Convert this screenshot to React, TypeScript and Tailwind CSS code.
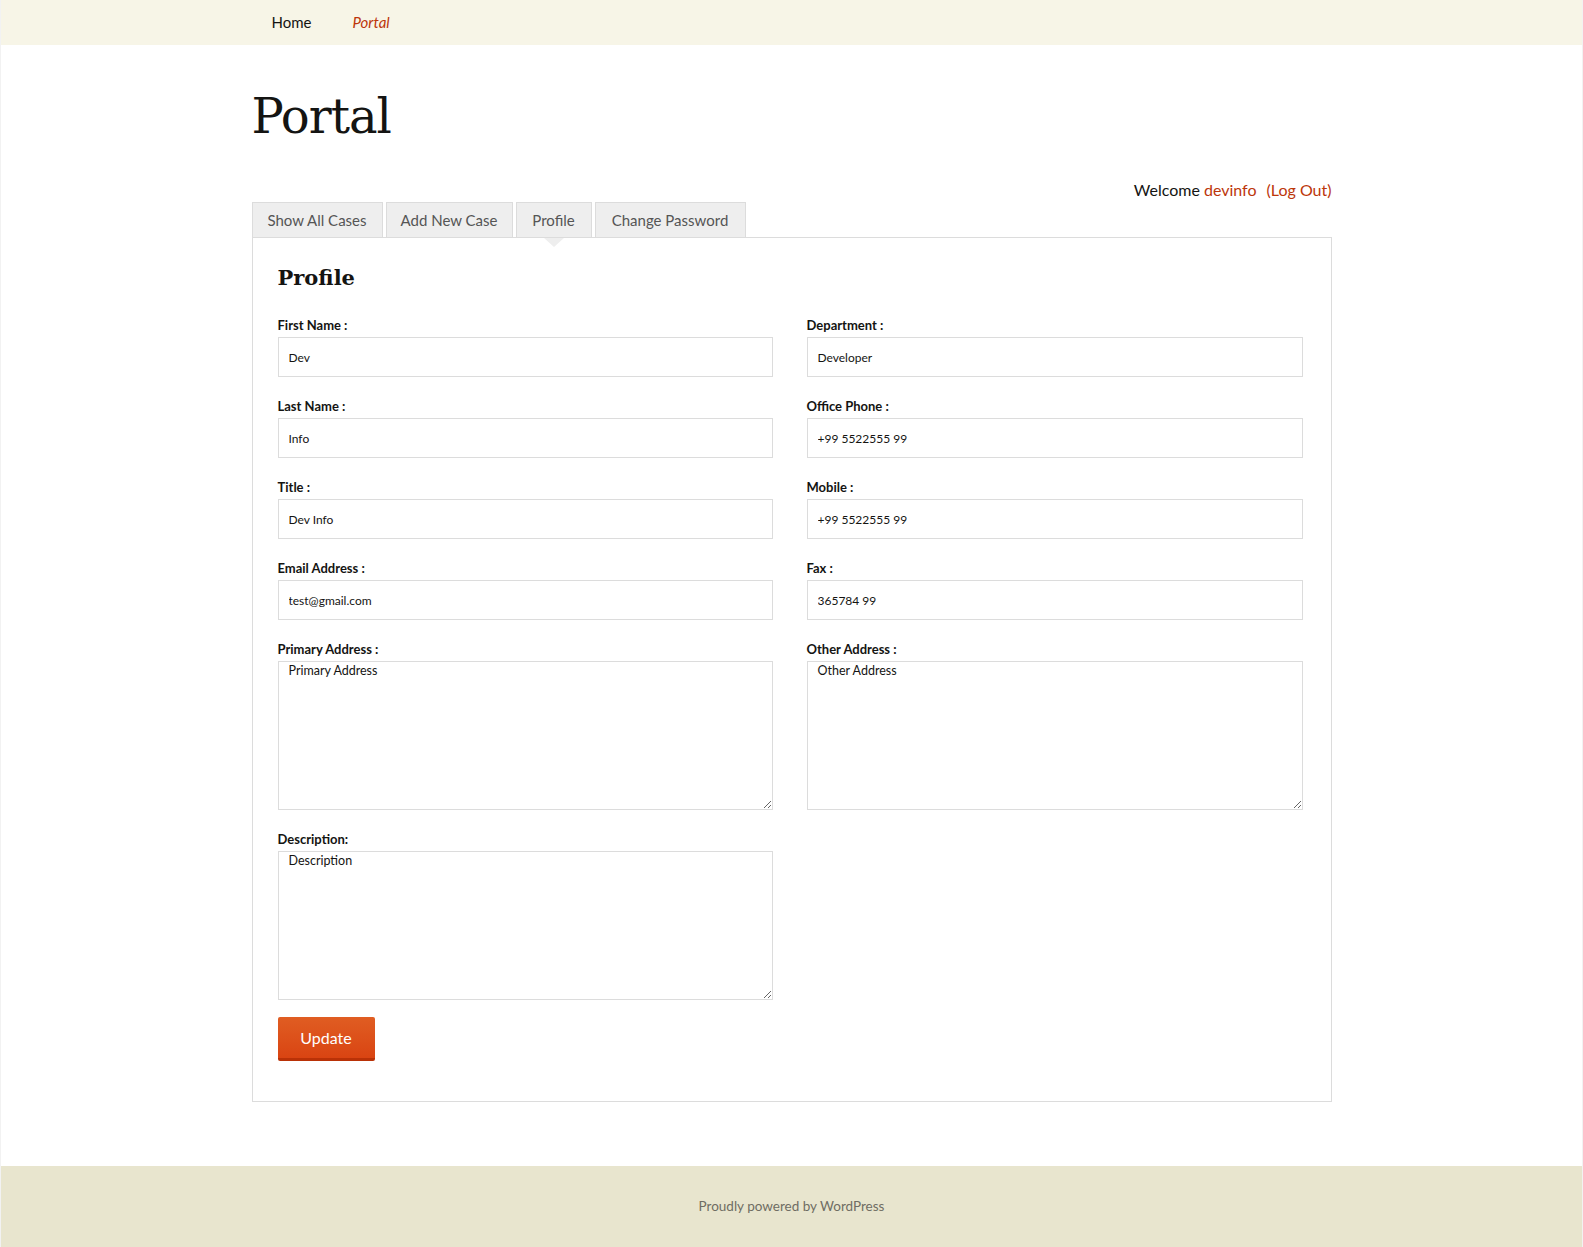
import React from 'react';

const leftFields = [
  { label: 'First Name :', value: 'Dev' },
  { label: 'Last Name :', value: 'Info' },
  { label: 'Title :', value: 'Dev Info' },
  { label: 'Email Address :', value: 'test@gmail.com' },
];

const rightFields = [
  { label: 'Department :', value: 'Developer' },
  { label: 'Office Phone :', value: '+99 5522555 99' },
  { label: 'Mobile :', value: '+99 5522555 99' },
  { label: 'Fax :', value: '365784 99' },
];

const tabs = [
  { name: 'Show All Cases', width: 'w-[131px]' },
  { name: 'Add New Case', width: 'w-[127px]' },
  { name: 'Profile', width: 'w-[76px]', active: true },
  { name: 'Change Password', width: 'w-[151px]' },
];

const Field = ({ label, value }: { label: string; value: string }) => (
  <div>
    <label className="block text-[13px] font-bold leading-[17px] text-[#141412]">{label}</label>
    <input
      className="mt-[3px] block h-[40px] w-full border border-[#dcdcdc] px-[10px] text-[12px] text-[#141412] outline-none"
      defaultValue={value}
      type="text"
    />
  </div>
);

const AreaField = ({ label, value }: { label: string; value: string }) => (
  <div>
    <label className="block text-[13px] font-bold leading-[17px] text-[#141412]">{label}</label>
    <textarea
      className="mt-[3px] block h-[149px] w-full border border-[#dcdcdc] px-[10px] pt-0 text-[12.5px] leading-[18px] text-[#141412] outline-none"
      defaultValue={value}
    />
  </div>
);

const App = () => {
  return (
    <div className="min-h-screen bg-white font-['Lato',sans-serif] text-[#141412]">
      <div className="border-x border-[#f2f2f2]">
        <header className="h-[45px] bg-[#f7f5e7]">
          <nav className="mx-auto flex h-full w-[1080px] items-center pl-5 text-[15px]">
            <a className="text-[#141412]" href="#">
              Home
            </a>
            <a className="ml-[41px] italic text-[#bc360a]" href="#">
              Portal
            </a>
          </nav>
        </header>

        <main className="mx-auto w-[1080px]">
          <h1 className="pt-[47px] font-['DejaVu_Serif',serif] text-[48px] leading-[48px] tracking-[-1px] text-[#141412]">
            Portal
          </h1>

          <div className="mt-[38px] text-right text-[16px] leading-[24px]">
            Welcome <span className="text-[#bc360a]">devinfo</span>
            <span className="ml-[10px] text-[#bc360a]">(Log Out)</span>
          </div>

          <div className="flex gap-[3px]">
            {tabs.map((tab) => (
              <div
                className={`relative flex h-[35px] items-center justify-center border border-b-0 border-[#dcdcdc] bg-[#eee] text-[15px] text-[#555] ${tab.width}`}
                key={tab.name}
              >
                {tab.name}
                {tab.active && (
                  <span className="absolute left-1/2 top-full z-10 mt-px h-0 w-0 -translate-x-1/2 border-x-[10px] border-t-[9px] border-x-transparent border-t-[#eee]" />
                )}
              </div>
            ))}
          </div>

          <section className="border border-[#dcdcdc] px-[25px] pb-[40px] pt-[26px]">
            <h2 className="font-['DejaVu_Serif',serif] text-[21px] font-bold leading-[28px] text-[#141412]">Profile</h2>

            <div className="mt-[25px] grid grid-cols-[495px_496px] gap-x-[34px] gap-y-[21px]">
              {leftFields.map((field, i) => (
                <React.Fragment key={field.label}>
                  <Field label={field.label} value={field.value} />
                  <Field label={rightFields[i].label} value={rightFields[i].value} />
                </React.Fragment>
              ))}
              <AreaField label="Primary Address :" value="Primary Address" />
              <AreaField label="Other Address :" value="Other Address" />
              <AreaField label="Description:" value="Description" />
            </div>

            <button className="mt-[17px] h-[44px] w-[97px] rounded-[2px] border-b-[3px] border-[#b93207] bg-gradient-to-b from-[#e05d22] to-[#d94412] text-[16px] text-white">
              Update
            </button>
          </section>
        </main>

        <footer className="mt-[64px] flex h-[81px] items-center justify-center bg-[#e8e5ce] text-[13.5px] text-[#6f6d63]">
          Proudly powered by WordPress
        </footer>
      </div>
    </div>
  );
};

export default App;
